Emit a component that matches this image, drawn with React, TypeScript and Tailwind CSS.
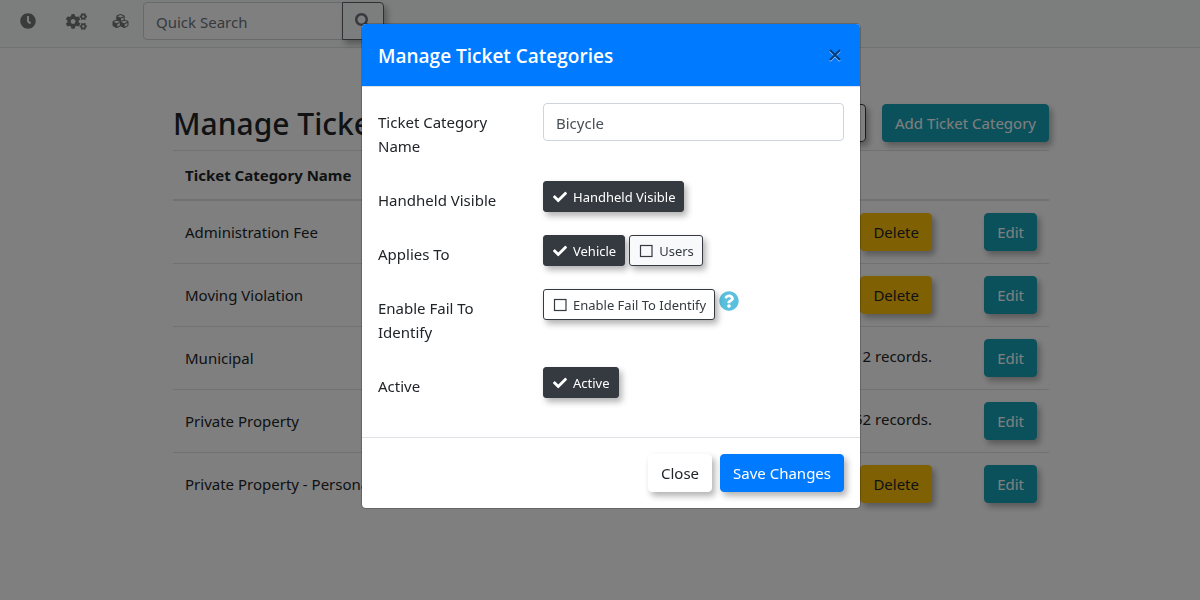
import { useState } from "react";
import type { ReactNode } from "react";
import { FaCheck, FaClock, FaCogs, FaCubes, FaQuestionCircle, FaSearch } from "react-icons/fa";

type Category = { name: string; records: number };

const categories: Category[] = [
  { name: "Administration Fee", records: 0 },
  { name: "Moving Violation", records: 0 },
  { name: "Municipal", records: 2 },
  { name: "Private Property", records: 52 },
  { name: "Private Property - Personal", records: 0 },
];

const btn = "h-[38px] px-3 border rounded text-[15px] leading-6 shadow-[3px_4px_6px_rgba(0,0,0,0.3)] cursor-pointer";

export default function App() {
  return (
    <div className="min-h-screen bg-white text-[#212529] text-[15px] leading-6 font-['Noto_Sans','Open_Sans',sans-serif]">
      <TopBar />
      <CategoryPage />
      <div className="fixed inset-0 bg-black/50 pl-[22px] pt-[23px] overflow-hidden">
        <CategoryModal />
      </div>
    </div>
  );
}

function TopBar() {
  return (
    <header className="flex items-start h-12 pt-0.5 pl-5 bg-[#f8fcfa] border-b border-[#dee2e6]">
      <nav className="flex items-center h-[38px] text-[#777]">
        <a href="#recent" aria-label="Recent">
          <FaClock className="size-4" />
        </a>
        <a href="#settings" aria-label="Settings" className="ml-[30px]">
          <FaCogs className="w-[21px] h-[17px]" />
        </a>
        <a href="#modules" aria-label="Modules" className="ml-[25px]">
          <FaCubes className="w-[17px] h-4" />
        </a>
      </nav>
      <form className="flex ml-3.5">
        <input
          type="search"
          aria-label="Quick Search"
          placeholder="Quick Search"
          className="w-[200px] h-[38px] px-3 pt-0.5 bg-white border border-[#ced4da] rounded-l placeholder:text-[#6c757d] focus:outline-none"
        />
        <button
          type="button"
          aria-label="Search"
          className={`${btn} -ml-px w-[42px] rounded-l-none border-[#5a6268] text-[#6c757d]`}
        >
          <FaSearch className="size-4" />
        </button>
      </form>
    </header>
  );
}

function CategoryPage() {
  return (
    <main className="w-[73%] ml-[173px] pt-14">
      <div className="flex items-start justify-between h-[46px]">
        <h1 className="text-[30px] leading-10 font-medium whitespace-nowrap">Manage Ticket Categories</h1>
        <div className="flex gap-4">
          <button type="button" aria-label="Filter" className={`${btn} w-12 border-[#343a40]`} />
          <button type="button" className={`${btn} bg-[#17a2b8] border-[#17a2b8] text-white whitespace-nowrap`}>
            Add Ticket Category
          </button>
        </div>
      </div>
      <table className="w-full border-collapse text-left">
        <thead>
          <tr className="border-t border-b-2 border-b-[#dee2e6] border-t-[#dee2e6]">
            <th className="p-3 font-bold">Ticket Category Name</th>
            <th className="p-3" aria-label="Delete" />
            <th className="p-3" aria-label="Edit" />
          </tr>
        </thead>
        <tbody>
          {categories.map((c) => (
            <tr key={c.name} className="h-[63px] border-t border-[#dee2e6]">
              <td className="px-3">{c.name}</td>
              <td className="px-3 text-right">
                {c.records > 0 ? (
                  <p className="pb-1">Used by {c.records} records.</p>
                ) : (
                  <button type="button" className={`${btn} bg-[#ffc107] border-[#ffc107]`}>
                    Delete
                  </button>
                )}
              </td>
              <td className="w-[105px] px-3 text-right">
                <button type="button" className={`${btn} bg-[#17a2b8] border-[#17a2b8] text-white`}>
                  Edit
                </button>
              </td>
            </tr>
          ))}
        </tbody>
      </table>
    </main>
  );
}

function CategoryModal() {
  return (
    <div
      role="dialog"
      aria-modal="true"
      aria-labelledby="modal-title"
      className="w-full max-w-[500px] mx-auto bg-white bg-clip-padding border border-black/20 rounded-[5px] overflow-hidden"
    >
      <div className="flex items-center justify-between p-4 bg-[#007bff] border-b border-[#dee2e6]">
        <h2 id="modal-title" className="pt-0.5 text-[19px] leading-7 font-semibold text-white font-['Open_Sans','Noto_Sans',sans-serif]">
          Manage Ticket Categories
        </h2>
        <button type="button" aria-label="Close dialog" className="flex items-center w-[18px] h-6 cursor-pointer">
          <CloseIcon />
        </button>
      </div>

      <form className="grid gap-4 p-4 pb-8">
        <Row label={<label htmlFor="category-name">Ticket Category Name</label>}>
          <input
            id="category-name"
            defaultValue="Bicycle"
            className="w-full h-[38px] px-3 pt-0.5 border border-[#ced4da] rounded text-[#495057] focus:outline-none"
          />
        </Row>
        <Row label="Handheld Visible">
          <Toggle label="Handheld Visible" checked />
        </Row>
        <Row label="Applies To">
          <Toggle label="Vehicle" checked />
          <Toggle label="Users" tinted />
        </Row>
        <Row label="Enable Fail To Identify">
          <Toggle label="Enable Fail To Identify" />
          <FaQuestionCircle className="size-5 mt-0.5 text-[#5bc0de]" />
        </Row>
        <Row label="Active">
          <Toggle label="Active" checked />
        </Row>
      </form>

      <div className="flex justify-end gap-2 p-4 border-t border-[#dee2e6]">
        <button type="button" className={`${btn} bg-white border-white`}>
          Close
        </button>
        <button type="button" className={`${btn} bg-[#007bff] border-[#007bff] text-white`}>
          Save Changes
        </button>
      </div>
    </div>
  );
}

function Row({ label, children }: { label: ReactNode; children: ReactNode }) {
  return (
    <div className="grid grid-cols-[135px_1fr] gap-[30px]">
      <div className="py-[7px]">{label}</div>
      <div className="flex items-start gap-1">{children}</div>
    </div>
  );
}

function Toggle({ label, checked = false, tinted = false }: { label: string; checked?: boolean; tinted?: boolean }) {
  const [on, setOn] = useState(checked);
  const off = tinted ? "bg-[#f8f9fa] text-[#343a40]" : "bg-white text-[#343a40]";
  return (
    <label
      className={`relative flex items-center gap-[5px] h-[31px] px-2 border border-[#343a40] rounded-[3px] text-[13px] leading-5 whitespace-nowrap shadow-[3px_4px_6px_rgba(0,0,0,0.3)] cursor-pointer ${
        on ? "bg-[#343a40] text-white" : off
      }`}
    >
      <input type="checkbox" className="sr-only" checked={on} onChange={(e) => setOn(e.target.checked)} />
      {on ? <FaCheck className="w-4 h-3.5" /> : <SquareIcon />}
      {label}
    </label>
  );
}

function SquareIcon() {
  return (
    <svg viewBox="0 0 16 14" className="w-4 h-3.5" fill="none" stroke="currentColor" strokeWidth="1.2" aria-hidden="true">
      <rect x="2.5" y="1.5" width="11.5" height="11" />
    </svg>
  );
}

function CloseIcon() {
  return (
    <svg viewBox="0 0 18 18" className="size-[18px]" fill="none" strokeWidth="2" aria-hidden="true">
      <path d="M4 5l10 10M14 5L4 15" stroke="#8ec5ff" />
      <path d="M4 4l10 10M14 4L4 14" stroke="#043d7c" />
    </svg>
  );
}
